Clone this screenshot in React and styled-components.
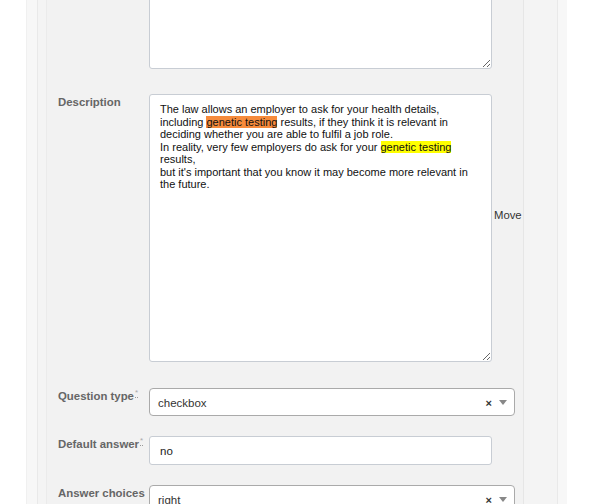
import React from "react";
import styled, { createGlobalStyle } from "styled-components";

const GlobalStyle = createGlobalStyle`
    html, body {
        margin: 0;
        padding: 0;
        background: #fff;
        overflow: hidden;
    }
    body {
        font-family: "Liberation Sans", Arial, sans-serif;
    }
`;

const App = () => {
    return (
        <>
            <GlobalStyle />
            <Page>
                <Outer>
                    <Middle>
                        <Inner>
                            <Row>
                                <Label />
                                <TextArea height={80} />
                            </Row>

                            <Row top={25}>
                                <Label>Description</Label>
                                <Editor>
                                    The law allows an employer to ask for your health details,
                                    <br />
                                    including <Mark color="#f68b3c">genetic testing</Mark> results, if they think it is relevant in
                                    <br />
                                    deciding whether you are able to fulfil a job role.
                                    <br />
                                    In reality, very few employers do ask for your <Mark color="#ffff00">genetic testing</Mark>
                                    <br />
                                    results,
                                    <br />
                                    but it's important that you know it may become more relevant in
                                    <br />
                                    the future.
                                </Editor>
                                <Move>Move</Move>
                            </Row>

                            <Row top={26}>
                                <Label>
                                    Question type<Req title="required">*</Req>
                                </Label>
                                <Select>
                                    <span>checkbox</span>
                                    <Clear>×</Clear>
                                    <Arrow />
                                </Select>
                            </Row>

                            <Row top={20}>
                                <Label>
                                    Default answer<Req title="required">*</Req>
                                </Label>
                                <Input value="no" readOnly />
                            </Row>

                            <Row top={20}>
                                <Label>Answer choices</Label>
                                <Select>
                                    <span>right</span>
                                    <Clear>×</Clear>
                                    <Arrow />
                                </Select>
                            </Row>
                        </Inner>
                    </Middle>
                </Outer>
            </Page>
        </>
    );
};

export default App;

const Page = styled.div`
    height: 504px;
    padding-left: 26px;
    width: 541px;
`;

const Outer = styled.div`
    height: 100%;
    background: #f7f7f7;
    border-left: 1px solid #f0f0f0;
    padding-left: 10px;
    padding-right: 9px;
`;

const Middle = styled.div`
    height: 100%;
    background: #f4f4f4;
    border-left: 1px solid #e9e9e9;
    border-right: 1px solid #e9e9e9;
    padding-left: 8px;
    padding-right: 33px;
`;

const Inner = styled.div`
    height: 100%;
    background: #f2f2f2;
    border-left: 1px solid #ebebeb;
    border-right: 1px solid #e6e6e6;
    padding-left: 11px;
    overflow: hidden;
`;

const Row = styled.div`
    display: flex;
    align-items: flex-start;
    margin-top: ${(p) => (p.top ? `${p.top}px` : "-11px")};
`;

const Label = styled.label`
    flex: 0 0 91px;
    font-size: 11.4px;
    font-weight: bold;
    line-height: 16px;
    color: #666;
    white-space: nowrap;
`;

const Req = styled.abbr`
    font-size: 8px;
    font-weight: normal;
    color: #aaa;
    vertical-align: top;
    line-height: 10px;
    text-decoration: none;
    border-bottom: 1px dotted #999;
    margin-left: 1px;
`;

const TextArea = styled.textarea`
    box-sizing: border-box;
    width: 343px;
    height: ${(p) => p.height}px;
    border: 1px solid #c8cdd4;
    border-radius: 3px;
    background: #fff;
    outline: none;
    resize: both;
`;

const Editor = styled.div`
    box-sizing: border-box;
    width: 343px;
    height: 268px;
    padding: 8px 10px;
    border: 1px solid #c8cdd4;
    border-radius: 3px;
    background: #fff;
    font-size: 11px;
    line-height: 12.5px;
    color: #111;
    white-space: nowrap;
    overflow: hidden;
    resize: both;
`;

const Mark = styled.span`
    background: ${(p) => p.color};
`;

const Move = styled.span`
    margin: 114px 0 0 2px;
    font-size: 11.3px;
    line-height: 14px;
    color: #333;
`;

const Select = styled.div`
    box-sizing: border-box;
    display: flex;
    align-items: center;
    width: 366px;
    height: 28px;
    padding-left: 8px;
    border: 1px solid #aaa;
    border-radius: 4px;
    background: #fff;
    font-size: 11.5px;
    color: #333;

    & > span {
        flex: 1;
        padding-top: 1px;
    }
`;

const Clear = styled.b`
    font-size: 11px;
    line-height: 10px;
    color: #333;
    margin-right: 7px;
    padding-top: 1px;
`;

const Arrow = styled.i`
    width: 0;
    height: 0;
    border-left: 4px solid transparent;
    border-right: 4px solid transparent;
    border-top: 5px solid #888;
    margin-right: 7px;
`;

const Input = styled.input`
    box-sizing: border-box;
    width: 343px;
    height: 29px;
    padding: 0 10px;
    border: 1px solid #c8cdd4;
    border-radius: 3px;
    background: #fff;
    font-family: "Liberation Sans", Arial, sans-serif;
    font-size: 11.5px;
    color: #222;
    outline: none;
`;
